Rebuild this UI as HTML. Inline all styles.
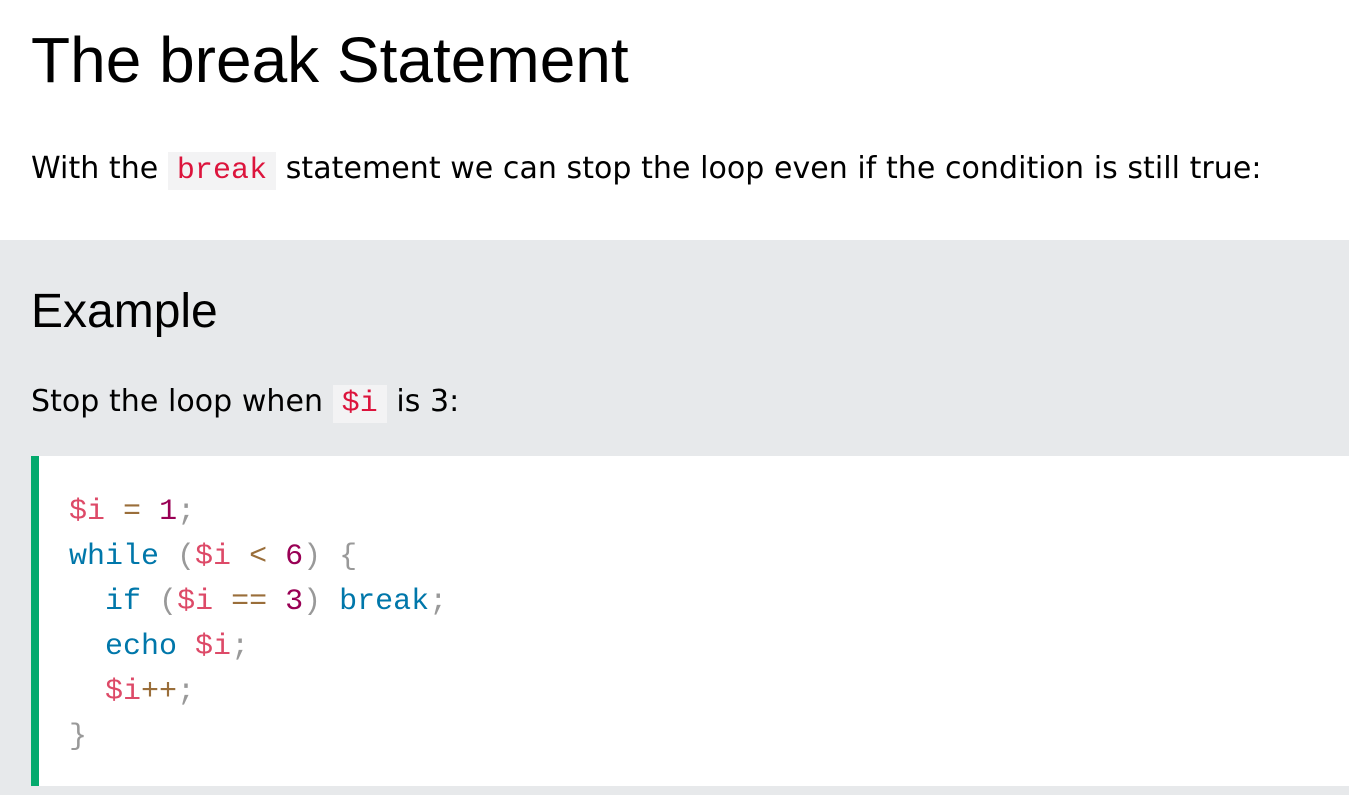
<!DOCTYPE html>
<html><head><meta charset="utf-8"><style>
body{margin:0;width:1349px;height:795px;overflow:hidden;background:#fff;position:relative;font-family:"DejaVu Sans",sans-serif;color:#000}
.a{position:absolute;white-space:nowrap}
h1{position:absolute;left:31px;top:20px;margin:0;font:64px/80px "Liberation Sans",Arial,sans-serif}
.p{font-size:30px;line-height:40px;letter-spacing:0.05px}
code{font-family:"Liberation Mono",monospace;color:crimson;background:#f3f3f4;padding:2px 9px;font-size:30px}
.ex{position:absolute;left:0;top:240px;width:1349px;height:555px;background:#e7e9eb}
h2{position:absolute;left:31px;top:282px;margin:0;font:48px/60px "Liberation Sans",Arial,sans-serif}
.cb{position:absolute;left:31px;top:456px;width:1318px;height:330px;background:#fff;border-left:8px solid #04AA6D;box-sizing:border-box}
pre{position:absolute;left:30px;top:34px;margin:0;font:30px/45px "Liberation Mono",monospace;color:#000}
.v{color:#dd4a68}.o{color:#9a6e3a}.n{color:#990055}.k{color:#0077aa}.u{color:#999}
</style></head><body>
<h1>The break Statement</h1>
<div class="a p" style="left:31px;top:149px">With the <code>break</code> statement we can stop the loop even if the condition is still true:</div>
<div class="ex"></div>
<h2>Example</h2>
<div class="a p" style="left:31px;top:382px">Stop the loop when <code>$i</code> is 3:</div>
<div class="cb"><pre><span class="v">$i</span> <span class="o">=</span> <span class="n">1</span><span class="u">;</span>
<span class="k">while</span> <span class="u">(</span><span class="v">$i</span> <span class="o">&lt;</span> <span class="n">6</span><span class="u">)</span> <span class="u">{</span>
  <span class="k">if</span> <span class="u">(</span><span class="v">$i</span> <span class="o">==</span> <span class="n">3</span><span class="u">)</span> <span class="k">break</span><span class="u">;</span>
  <span class="k">echo</span> <span class="v">$i</span><span class="u">;</span>
  <span class="v">$i</span><span class="o">++</span><span class="u">;</span>
<span class="u">}</span></pre></div>
</body></html>
